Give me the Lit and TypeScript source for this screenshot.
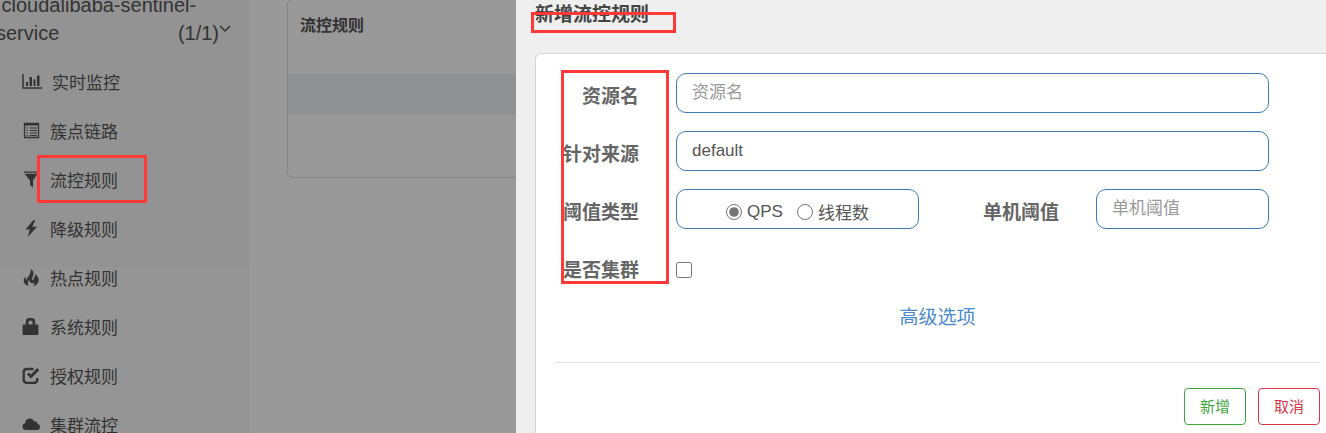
import { LitElement, html, css, svg } from "lit";
import { customElement } from "lit/decorators.js";

const icons = {
  chart: svg`<path d="M1 1v14h19" fill="none" stroke="currentColor" stroke-width="1.5"/><path d="M4 9h2v4H4zM7.500 4h2.500v9H7.500zM11.500 6.500h2V13h-2zM15 2.500h2.500V13H15z"/>`,
  list: svg`<path d="M2.500 1.500h14v14h-14z" fill="none" stroke="currentColor" stroke-width="1.300"/><path d="M2 1h15v2.500H2zM4.500 5.500H6v1H4.500zM7.500 5.500h7.500v1H7.500zM4.500 8H6v1H4.500zM7.500 8h7.500v1H7.500zM4.500 10.500H6v1H4.500zM7.500 10.500h7.500v1H7.500zM4.500 13H6v1H4.500zM7.500 13h7.500v1H7.500z"/>`,
  funnel: svg`<path d="M2 .5h14v1.300H2zM2.500 2.800h13L11 9.500v7L8 14V9.500z"/>`,
  bolt: svg`<path d="M11.500 0 3.500 9.500h4.300L5.800 17 15 6.800h-4.700L13.300 0z"/>`,
  fire: svg`<path d="M8.500 0c3.500 1.800 3.600 4.700 2.300 7.300-.8 1.600-1 2.900-.2 4.200 1-.7 1.400-1.700 1.300-3 1-.2 1.500-1.500 1.200-3.200 2.700 1.500 3.900 4 3.500 6.700-.4 2.700-2.600 4.600-5.400 5 1-1.300 1.300-2.400.9-3.600-.9.800-1.700 1-2.800.7-1.700-.5-2.300-2-1.900-3.800C5.700 12.300 5.200 14.500 6.800 17 4 16.300 1.800 14.500 1.700 12c-.1-1.900.7-3.300 1.900-4.400-.1 1.700.1 2.800 1 3.700C4.700 7.800 9.800 5.500 8.500 0z"/>`,
  lock: svg`<path d="M1.500 6.500h2.300V3.500Q3.800 0 7.300 0h2.400q3.500 0 3.500 3.500v3h2.300q.9 0 .9.900V16q0 .9-.9.900h-14q-.9 0-.9-.9V7.400q0-.9.900-.9zM6.500 6.500h4V4q0-1.200-1.200-1.200H7.700Q6.500 2.800 6.500 4z"/>`,
  check: svg`<path d="M11.500 2H5Q1.700 2 1.700 5.300v7.200q0 3.300 3.300 3.300h7q3.300 0 3.300-3.300V11" fill="none" stroke="currentColor" stroke-width="2.300"/><path d="m6 6.500 3 3L16.300 2" fill="none" stroke="currentColor" stroke-width="2.800"/>`,
  cloud: svg`<path d="M4.500 14Q.5 14 .5 10.500q0-2.700 2.700-3.300C3.200 4 5.500 2.500 7.800 2.500c2 0 3.600 1 4.200 2.800 2-.4 3.400.8 3.400 2.500q2.600.5 2.600 3 0 3.200-3.500 3.200z"/>`,
};

const menu = [
  { icon: icons.chart, label: "实时监控", wide: true },
  { icon: icons.list, label: "簇点链路" },
  { icon: icons.funnel, label: "流控规则" },
  { icon: icons.bolt, label: "降级规则" },
  { icon: icons.fire, label: "热点规则" },
  { icon: icons.lock, label: "系统规则" },
  { icon: icons.check, label: "授权规则" },
  { icon: icons.cloud, label: "集群流控" },
];

@customElement("side-menu")
export class SideMenu extends LitElement {
  static styles = css`
    :host { display: block; background: linear-gradient(#f5f5f5 267px, #f8f8f8 267px); color: #555; }
    .service { margin: -9px 19px 0 -4px; font-size: 20px; line-height: 28px; white-space: nowrap; }
    .line { display: flex; justify-content: space-between; }
    .count { display: flex; align-items: center; }
    .chevron { width: 12px; height: 16px; margin-bottom: 8px; }
    .items { list-style: none; margin: 10px 0 0; padding: 0; }
    .link { display: flex; align-items: center; gap: 10px; height: 49px; padding-left: 22px; color: inherit; font-size: 17px; text-decoration: none; }
    .icon { width: 18px; height: 18px; fill: currentColor; }
    .icon.wide { width: 20px; }
  `;

  render() {
    return html`
      <div class="service">
        <div>&nbsp;cloudalibaba-sentinel-</div>
        <div class="line">
          <span>service</span>
          <span class="count">(1/1)
            <svg class="chevron" viewBox="0 0 12 16"><path d="m1 5 5 5 5-5" fill="none" stroke="currentColor" stroke-width="1.500"/></svg>
          </span>
        </div>
      </div>
      <ul class="items">
        ${menu.map((m) => html`<li>
          <a class="link" href="#">
            <svg class="icon ${m.wide ? "wide" : ""}" viewBox="0 0 ${m.wide ? 20 : 18} 18">${m.icon}</svg>
            <span>${m.label}</span>
          </a>
        </li>`)}
      </ul>
    `;
  }
}

@customElement("rule-dialog")
export class RuleDialog extends LitElement {
  static styles = css`
    :host { display: flex; flex-direction: column; background: #efefef; color: #666; font-size: 17px; }
    .title { position: relative; margin: 0; padding: 0 19px; height: 53px; color: #444; font-size: 19px; line-height: 30px; box-sizing: border-box; }
    .card { position: relative; flex: 1; margin-left: 19px; padding: 19px 6px 0 19px; background: #fff; border: 1px solid #d5d5d5; border-width: 1px 0 0 1px; border-top-left-radius: 6px; }
    .rows { display: grid; gap: 18px; padding-right: 51px; }
    .row { display: grid; grid-template-columns: 84px 1fr; column-gap: 37px; min-height: 40px; }
    .pair { display: grid; grid-template-columns: 243fr 177px 173fr; }
    .pair .label { margin-right: 37px; }
    .label { padding-top: 6px; font-size: 19px; line-height: 36px; height: 34px; font-weight: bold; text-align: right; white-space: nowrap; }
    .box { width: 100%; height: 40px; box-sizing: border-box; padding: 0 15px; border: 1px solid #3d79b8; border-radius: 10px; background: #fff; color: #555; font: inherit; }
    .box::placeholder { color: #999; }
    .choices { display: flex; align-items: center; justify-content: center; gap: 14px; margin: 0; padding: 5px 0 0; }
    .choice { display: flex; align-items: center; gap: 5px; white-space: nowrap; }
    .tick { width: 16px; height: 16px; margin: 0; accent-color: #767676; }
    .cluster { align-self: center; padding-top: 6px; display: flex; }
    .more { display: block; width: max-content; margin: 17px auto 0; color: #4a8acb; font-size: 19px; line-height: 28px; text-decoration: none; }
    .rule { margin: 30px 0 25px; border: 0; border-top: 1px solid #e2e2e2; }
    .actions { display: flex; justify-content: flex-end; gap: 12px; }
    .button { height: 37px; padding: 0 15px 2px; border: 1px solid; border-radius: 4px; background: #fff; font: inherit; font-size: 15px; }
    .add { color: #3fa63f; }
    .cancel { color: #d9364a; }
    .mark { position: absolute; box-sizing: border-box; border: 3px solid #ff3838; pointer-events: none; }
    .mark-title { left: 15px; top: 12px; width: 145px; height: 21px; }
    .mark-labels { left: 25px; top: 16px; width: 108px; height: 214px; }
  `;

  render() {
    return html`
      <h2 class="title">新增流控规则<span class="mark mark-title"></span></h2>
      <form class="card">
        <div class="rows">
          <div class="row">
            <label class="label" for="resource">资源名</label>
            <input class="box" id="resource" placeholder="资源名" />
          </div>
          <div class="row">
            <label class="label" for="origin">针对来源</label>
            <input class="box" id="origin" value="default" />
          </div>
          <div class="row">
            <span class="label" id="grade">阈值类型</span>
            <div class="pair">
              <div class="box choices" role="radiogroup" aria-labelledby="grade">
                <label class="choice"><input class="tick" type="radio" name="grade" checked />QPS</label>
                <label class="choice"><input class="tick" type="radio" name="grade" />线程数</label>
              </div>
              <label class="label" for="threshold">单机阈值</label>
              <input class="box" id="threshold" placeholder="单机阈值" />
            </div>
          </div>
          <div class="row">
            <label class="label" for="cluster">是否集群</label>
            <div class="cluster"><input class="tick" type="checkbox" id="cluster" /></div>
          </div>
        </div>
        <a class="more" href="#">高级选项</a>
        <hr class="rule" />
        <div class="actions">
          <button class="button add" type="button">新增</button>
          <button class="button cancel" type="button">取消</button>
        </div>
        <span class="mark mark-labels"></span>
      </form>
    `;
  }
}

@customElement("app-root")
export class AppRoot extends LitElement {
  static styles = css`
    :host { display: block; position: relative; height: 100vh; overflow: hidden; background: #fff; font-family: "Liberation Sans", "Noto Sans CJK SC", sans-serif; }
    .page { display: grid; grid-template-columns: 250px 1fr; height: 100%; }
    .panel { margin: -1px 19px 0 37px; border: 1px solid #dcdddf; border-radius: 6px; overflow: hidden; }
    .heading { margin: 0; height: 74px; padding: 12px 12px 0; box-sizing: border-box; color: #555; font-size: 16px; line-height: 28px; }
    .stripe { height: 41px; background: #f0f2f5; }
    .foot { height: 62px; }
    .backdrop { position: absolute; inset: 0; background: rgba(0, 0, 0, 0.4); }
    .dialog { position: absolute; inset: 0 0 0 516px; }
    .mark { position: absolute; left: 37px; top: 155px; width: 110px; height: 48px; box-sizing: border-box; border: 3px solid #ff3838; }
  `;

  render() {
    return html`
      <div class="page">
        <side-menu></side-menu>
        <main>
          <section class="panel">
            <h1 class="heading">流控规则</h1>
            <div class="stripe"></div>
            <div class="foot"></div>
          </section>
        </main>
      </div>
      <div class="backdrop"></div>
      <div class="mark"></div>
      <rule-dialog class="dialog" role="dialog" aria-label="新增流控规则"></rule-dialog>
    `;
  }
}
